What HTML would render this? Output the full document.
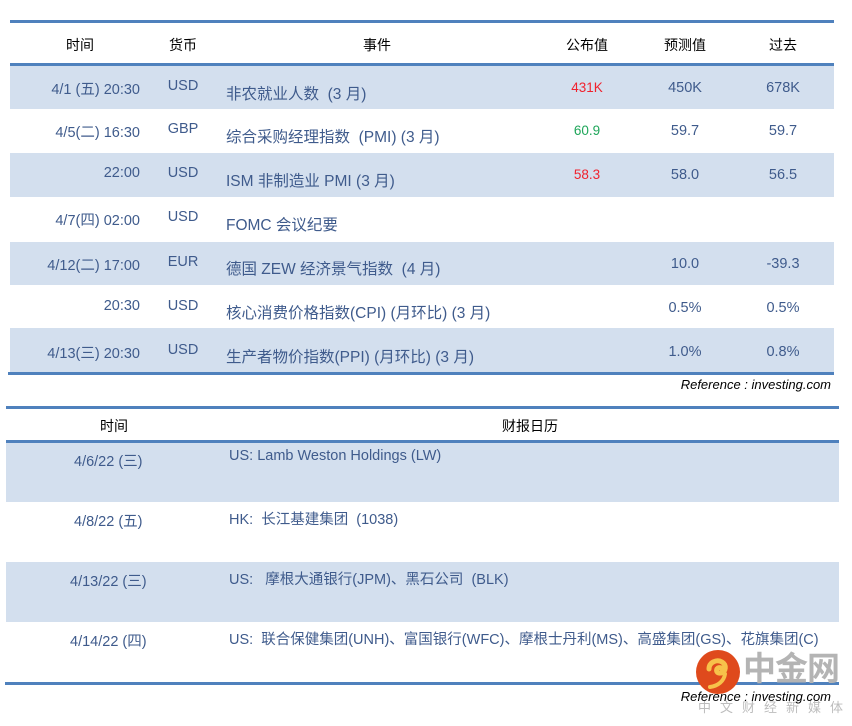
<!DOCTYPE html>
<html><head><meta charset="utf-8"><style>
*{margin:0;padding:0;box-sizing:border-box}
body{width:852px;height:726px;background:#fff;position:relative;overflow:hidden;font-family:"Liberation Sans","Noto Sans CJK SC",sans-serif;color:#3f5b8c}
.a{position:absolute;white-space:nowrap}
.line{position:absolute;background:#4f81bd}
.sh{position:absolute;background:#d3dfee}
.h{color:#000;font-size:14px}
.t{font-size:14.5px}
.e{font-size:15.5px}
.r{text-align:right}
.c{text-align:center}
</style></head><body>
<div class="line" style="left:10px;top:20px;width:824px;height:3px"></div>
<div class="a h c" style="left:50px;top:35px;width:60px">时间</div>
<div class="a h c" style="left:153px;top:35px;width:60px">货币</div>
<div class="a h c" style="left:347px;top:35px;width:60px">事件</div>
<div class="a h c" style="left:557px;top:35px;width:60px">公布值</div>
<div class="a h c" style="left:655px;top:35px;width:60px">预测值</div>
<div class="a h c" style="left:753px;top:35px;width:60px">过去</div>
<div class="line" style="left:10px;top:63px;width:824px;height:3px"></div>
<div class="sh" style="left:10px;top:66px;width:824px;height:43px"></div>
<div class="sh" style="left:10px;top:153px;width:824px;height:44px"></div>
<div class="sh" style="left:10px;top:242px;width:824px;height:43px"></div>
<div class="sh" style="left:10px;top:328px;width:824px;height:44px"></div>
<div class="line" style="left:8px;top:372px;width:826px;height:3px"></div>

<div class="a t r" style="left:0;top:78px;width:140px">4/1 (五) 20:30</div>
<div class="a t c" style="left:153px;top:78px;width:60px">USD</div>
<div class="a e" style="left:226px;top:82px">非农就业人数&nbsp; (3 月)</div>
<div class="a c" style="left:557px;top:80px;width:60px;font-size:13.5px;color:#f0222e">431K</div>
<div class="a t c" style="left:655px;top:80px;width:60px">450K</div>
<div class="a t c" style="left:753px;top:80px;width:60px">678K</div>

<div class="a t r" style="left:0;top:121px;width:140px">4/5(二) 16:30</div>
<div class="a t c" style="left:153px;top:121px;width:60px">GBP</div>
<div class="a e" style="left:226px;top:125px">综合采购经理指数&nbsp; (PMI) (3 月)</div>
<div class="a c" style="left:557px;top:123px;width:60px;font-size:13.5px;color:#1fa65a">60.9</div>
<div class="a t c" style="left:655px;top:123px;width:60px">59.7</div>
<div class="a t c" style="left:753px;top:123px;width:60px">59.7</div>

<div class="a t r" style="left:0;top:165px;width:140px">22:00</div>
<div class="a t c" style="left:153px;top:165px;width:60px">USD</div>
<div class="a e" style="left:226px;top:169px">ISM 非制造业 PMI (3 月)</div>
<div class="a c" style="left:557px;top:167px;width:60px;font-size:13.5px;color:#f0222e">58.3</div>
<div class="a t c" style="left:655px;top:167px;width:60px">58.0</div>
<div class="a t c" style="left:753px;top:167px;width:60px">56.5</div>

<div class="a t r" style="left:0;top:209px;width:140px">4/7(四) 02:00</div>
<div class="a t c" style="left:153px;top:209px;width:60px">USD</div>
<div class="a e" style="left:226px;top:213px">FOMC 会议纪要</div>

<div class="a t r" style="left:0;top:254px;width:140px">4/12(二) 17:00</div>
<div class="a t c" style="left:153px;top:254px;width:60px">EUR</div>
<div class="a e" style="left:226px;top:257px">德国 ZEW 经济景气指数&nbsp; (4 月)</div>
<div class="a t c" style="left:655px;top:256px;width:60px">10.0</div>
<div class="a t c" style="left:753px;top:256px;width:60px">-39.3</div>

<div class="a t r" style="left:0;top:298px;width:140px">20:30</div>
<div class="a t c" style="left:153px;top:298px;width:60px">USD</div>
<div class="a e" style="left:226px;top:301px">核心消费价格指数(CPI) (月环比) (3 月)</div>
<div class="a t c" style="left:655px;top:300px;width:60px">0.5%</div>
<div class="a t c" style="left:753px;top:300px;width:60px">0.5%</div>

<div class="a t r" style="left:0;top:342px;width:140px">4/13(三) 20:30</div>
<div class="a t c" style="left:153px;top:342px;width:60px">USD</div>
<div class="a e" style="left:226px;top:345px">生产者物价指数(PPI) (月环比) (3 月)</div>
<div class="a t c" style="left:655px;top:344px;width:60px">1.0%</div>
<div class="a t c" style="left:753px;top:344px;width:60px">0.8%</div>

<div class="a r" style="left:600px;top:377px;width:231px;font-size:13px;font-style:italic;color:#000">Reference : investing.com</div>

<div class="line" style="left:6px;top:406px;width:833px;height:3px"></div>
<div class="a h c" style="left:84px;top:416px;width:60px">时间</div>
<div class="a h c" style="left:490px;top:416px;width:80px">财报日历</div>
<div class="line" style="left:6px;top:440px;width:833px;height:3px"></div>
<div class="sh" style="left:6px;top:443px;width:833px;height:59px"></div>
<div class="sh" style="left:6px;top:562px;width:833px;height:60px"></div>
<div class="line" style="left:5px;top:682px;width:834px;height:3px"></div>

<div class="a t" style="left:74px;top:450px">4/6/22 (三)</div>
<div class="a t" style="left:229px;top:448px">US: Lamb Weston Holdings (LW)</div>
<div class="a t" style="left:74px;top:510px">4/8/22 (五)</div>
<div class="a t" style="left:229px;top:508px">HK:&nbsp; 长江基建集团&nbsp; (1038)</div>
<div class="a t" style="left:70px;top:570px">4/13/22 (三)</div>
<div class="a t" style="left:229px;top:568px">US:&nbsp;&nbsp; 摩根大通银行(JPM)、黑石公司&nbsp; (BLK)</div>
<div class="a t" style="left:70px;top:630px">4/14/22 (四)</div>
<div class="a t" style="left:229px;top:628px">US:&nbsp; 联合保健集团(UNH)、富国银行(WFC)、摩根士丹利(MS)、高盛集团(GS)、花旗集团(C)</div>

<div class="a" style="left:743px;top:649px;font-size:33px;font-weight:bold;color:#b4b4b4;letter-spacing:-1px;line-height:40px">中金网</div>
<div class="a" style="left:698px;top:697px;font-size:13px;color:#bdbdbd;letter-spacing:9px">中文财经新媒体</div>
<svg class="a" style="left:695px;top:649px" width="46" height="46" viewBox="0 0 46 46">
<circle cx="23" cy="23" r="22" fill="#df4a1c"/>
<path d="M14 20c0-7 8-10 13-7 5 3 4 10-1 11-4 1-6-3-3-5 2-1 4 0 4 1" fill="none" stroke="#f7c24a" stroke-width="5" stroke-linecap="round"/>
<path d="M30 25c-1 7-7 12-15 13" fill="none" stroke="#f7c24a" stroke-width="4" stroke-linecap="round"/>
</svg>
<div class="a r" style="left:600px;top:689px;width:231px;font-size:13px;font-style:italic;color:#000">Reference : investing.com</div>
</body></html>
